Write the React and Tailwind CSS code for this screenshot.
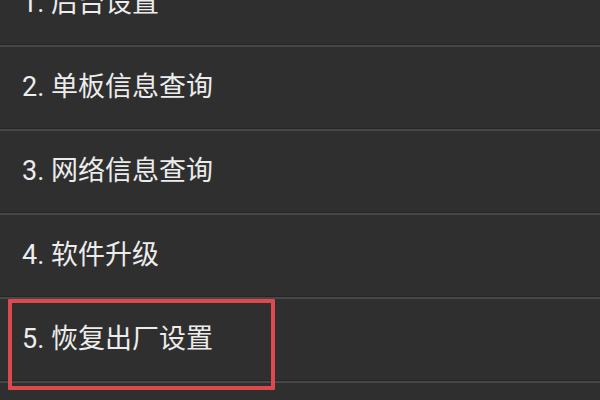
import React from "react";

const items = ["1. 后台设置", "2. 单板信息查询", "3. 网络信息查询", "4. 软件升级", "5. 恢复出厂设置"];

export default function App() {
  return (
    <div
      className="w-[600px] h-[400px] overflow-hidden bg-[#2f2f2f]"
      style={{ fontFamily: 'Roboto, "Noto Sans CJK SC", sans-serif' }}
    >
      <div className="mt-[-37px] flex flex-col">
        {items.map((t, i) => (
          <div key={i} className="relative flex flex-col">
            <div className="h-[81px] flex items-center pl-[22px] text-[27px] text-[#ececec] leading-none">
              {t}
            </div>
            <div className="h-[1px] bg-[#262626]" />
            <div className="h-[2px] bg-[#474747]" />
            {i === 4 && (
              <div className="absolute left-[8px] top-0 w-[267px] h-[91px] border-[4px] border-[#dc4a50] rounded-[1px]" />
            )}
          </div>
        ))}
      </div>
    </div>
  );
}
